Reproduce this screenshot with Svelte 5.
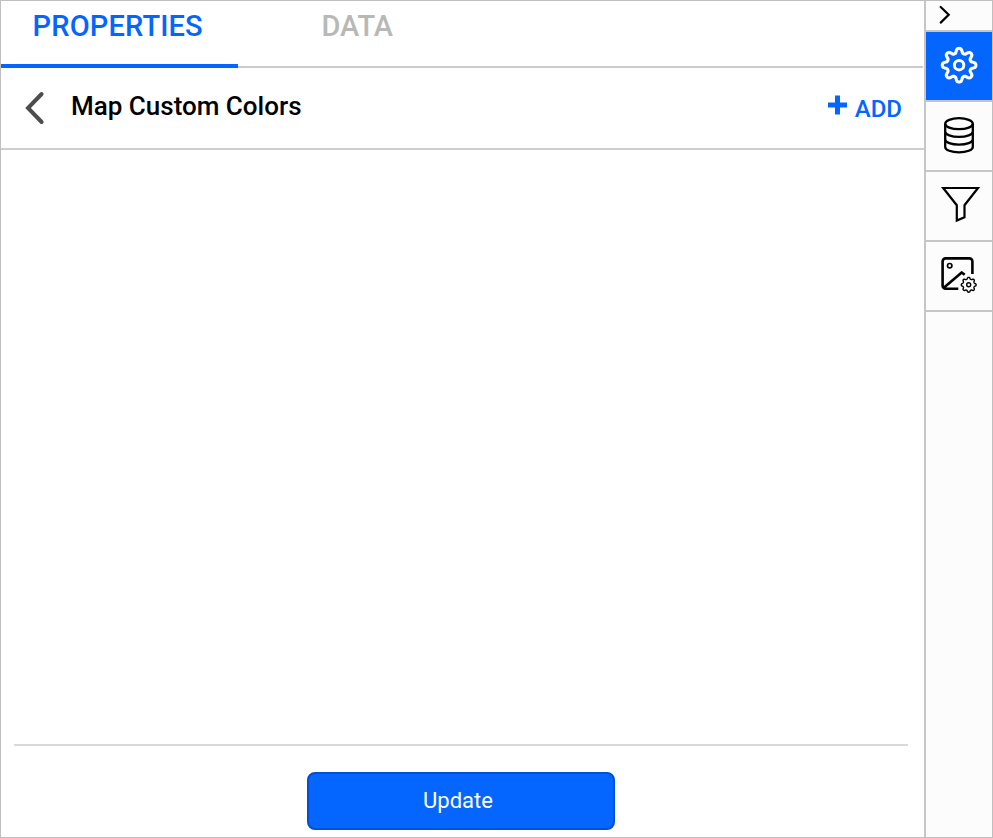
<script>
  function cog(cx, cy, base, amp, teeth = 8) {
    const steps = 160;
    const points = [];
    for (let i = 0; i < steps; i++) {
      const a = (i / steps) * Math.PI * 2;
      const wave = Math.tanh(1.5 * Math.cos(teeth * a)) / Math.tanh(1.5);
      const r = base + amp * wave;
      points.push(`${(cx + r * Math.sin(a)).toFixed(2)} ${(cy - r * Math.cos(a)).toFixed(2)}`);
    }
    return `M${points.join('L')}Z`;
  }

  const tools = ['settings', 'data', 'filter', 'image'];
  let active = $state('settings');
</script>

<div class="app">
  <main>
    <nav class="tabs">
      <button class="tab current">PROPERTIES</button>
      <button class="tab rest">DATA</button>
    </nav>
    <header>
      <button class="back" aria-label="Back">
        <svg width="22" height="34" viewBox="0 0 22 34"><path d="M18.6 3 5 17l13.6 14" fill="none" stroke="#4d4d4d" stroke-width="4" stroke-linecap="round" /></svg>
      </button>
      <h1>Map Custom Colors</h1>
      <button class="add">
        <svg width="20" height="20" viewBox="0 0 20 20"><path d="M9.5 .5v19M0 10h19" stroke="#0565ff" stroke-width="5" /></svg>
        <span>ADD</span>
      </button>
    </header>
    <section></section>
    <footer><button class="update">Update</button></footer>
  </main>
  <aside>
    <button class="collapse" aria-label="Collapse">
      <svg width="12" height="20" viewBox="0 0 12 20"><path d="m1.7 2 8 7.8-8 7.8" fill="none" stroke="#000" stroke-width="2.2" stroke-linecap="round" /></svg>
    </button>
    {#each tools as tool}
      <button class="tool" class:active={active === tool} aria-label={tool} onclick={() => (active = tool)}>
        <svg width="66" height="68" viewBox="0 0 66 68" fill="none" stroke="currentColor" stroke-linejoin="round">
          {#if tool === 'settings'}
            <path d={cog(33.1, 33.2, 14.5, 2.3)} stroke-width="3.1" />
            <circle cx="33.1" cy="33.2" r="4.7" stroke-width="3" />
          {:else if tool === 'data'}
            <g stroke-width="2.3">
              <ellipse cx="33" cy="21.7" rx="13.8" ry="5.5" />
              <path d="M19.2 21.7v23.2c0 3 6.2 5.4 13.8 5.4s13.8-2.4 13.8-5.4V21.7M19.2 29.500c0 3 6.2 5.4 13.8 5.4s13.8-2.4 13.8-5.4M19.2 37.300c0 3 6.2 5.4 13.8 5.4s13.8-2.4 13.8-5.4" />
            </g>
          {:else if tool === 'filter'}
            <path d="M17.2 16h34.8L38.500 33.200v12l-7.700 3.400V33.200Z" stroke-width="2.2" stroke-linejoin="miter" />
          {:else}
            <path d="M32.300 46.700H19.600a3 3 0 0 1-3-3V19.400a3 3 0 0 1 3-3h23.800a3 3 0 0 1 3 3V32M17.500 46l18.200-15.600 3 2.400" stroke-width="2.600" />
            <circle cx="23.700" cy="23.700" r="2.200" stroke-width="1.700" />
            <path d={cog(42.7, 42.8, 6.6, 0.8)} stroke-width="1.4" />
            <circle cx="42.7" cy="42.8" r="2" stroke-width="1.4" />
          {/if}
        </svg>
      </button>
    {/each}
  </aside>
</div>

<style>
  .app {
    display: flex;
    box-sizing: border-box;
    width: 993px;
    height: 838px;
    border: 1px solid #bfbfbf;
    background: #fff;
    font-family: Roboto, sans-serif;
    overflow: hidden;
  }
  button {
    display: flex;
    box-sizing: border-box;
    margin: 0;
    padding: 0;
    border: 0;
    background: none;
    font-family: inherit;
    cursor: pointer;
  }
  svg { display: block; flex: none; }
  main {
    display: flex;
    flex-direction: column;
    width: 923px;
  }
  .tabs { display: flex; height: 67px; margin-right: 1px; }
  .tab {
    font-size: 29px;
    font-weight: 500;
    line-height: 34px;
    padding-top: 8px;
  }
  .current { width: 237px; padding-left: 31.6px; color: #0565ff; border-bottom: 4px solid #0565ff; letter-spacing: 0.15px; }
  .rest { flex: 1; padding-left: 83.4px; color: #b8b8b8; border-bottom: 2px solid #cbcbcb; }
  header {
    display: flex;
    box-sizing: border-box;
    height: 82px;
    border-bottom: 2px solid #cecece;
  }
  .back { margin: 23px 0 0 22px; align-self: flex-start; }
  h1 {
    margin: 22px 0 0 26px;
    font-size: 26px;
    line-height: 32px;
    font-weight: 500;
    color: #000;
    white-space: nowrap;
  }
  .add {
    margin: 25px 22px 0 auto;
    align-self: flex-start;
    gap: 7px;
    color: #0565ff;
    font-size: 24px;
    line-height: 32px;
    font-weight: 500;
  }
  .add svg { margin-top: 2px; }
  section { flex: 1; }
  footer {
    display: flex;
    justify-content: center;
    box-sizing: border-box;
    height: 93px;
    margin: 0 16px 0 13px;
    padding-top: 26px;
    border-top: 2px solid #d9d9d9;
  }
  .update {
    width: 308px;
    height: 58px;
    justify-content: center;
    padding-right: 6px;
    border: 2px solid #0050d5;
    border-radius: 8px;
    background: #0565ff;
    color: #fff;
    font-size: 22px;
    line-height: 53px;
  }
  aside {
    display: flex;
    flex-direction: column;
    width: 66px;
    border-left: 2px solid #c6c6c6;
    background: #fcfcfc;
  }
  .collapse { height: 31px; padding: 4px 0 0 13px; border-bottom: 2px solid #c6c6c6; }
  .tool { height: 70px; color: #000; border-bottom: 2px solid #c6c6c6; }
  .active { background: #0565ff; color: #fff; }
</style>
